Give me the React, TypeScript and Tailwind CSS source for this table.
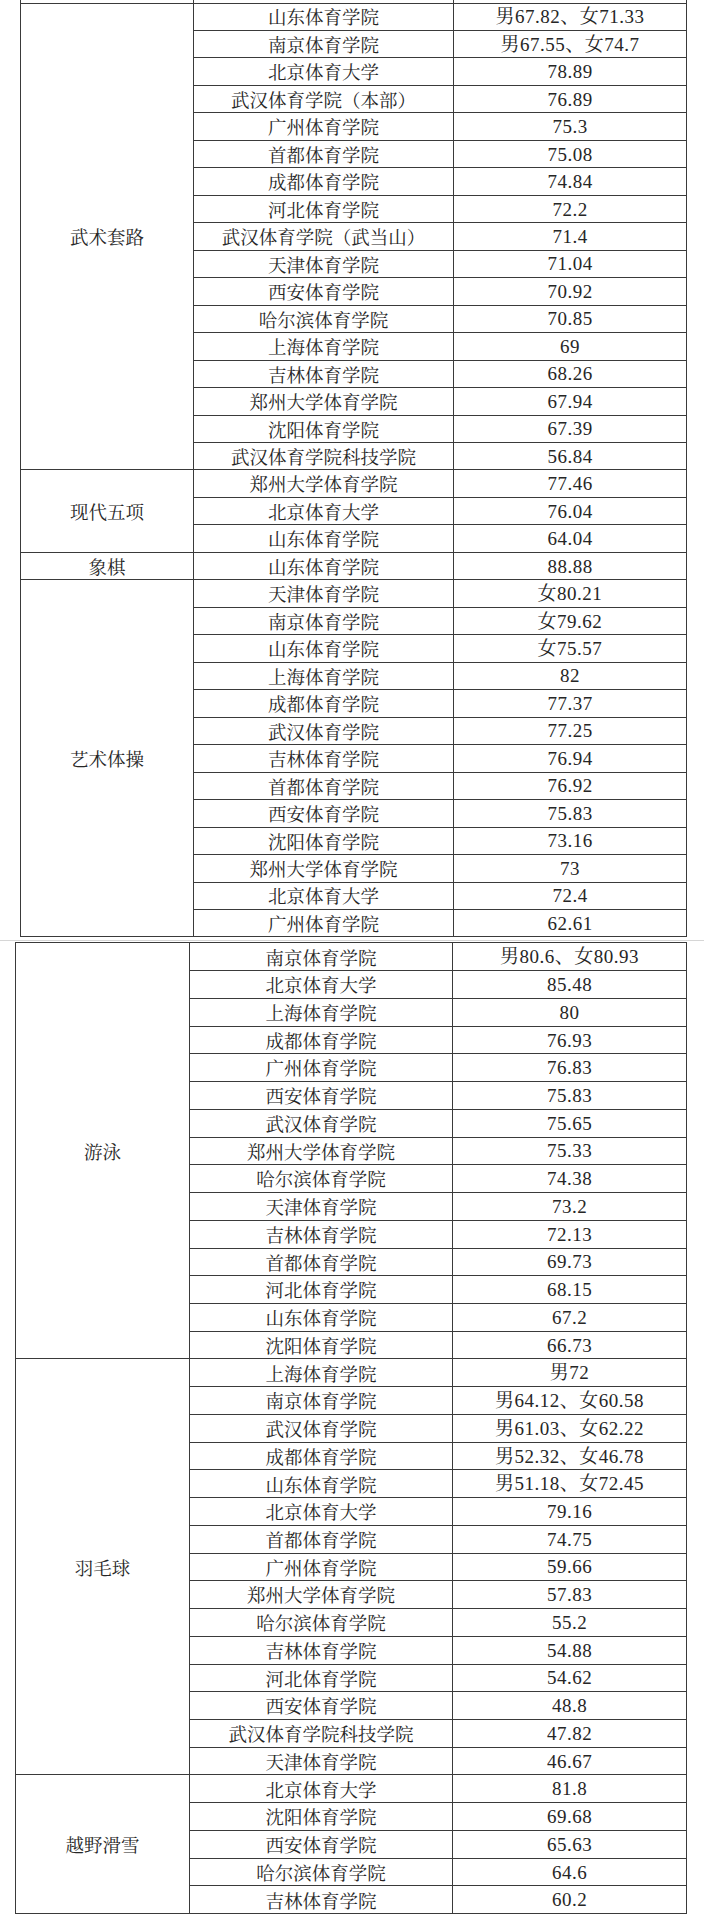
type Group = { sport: string; rows: [string, string][] }

const topGroups: Group[] = [
  {
    sport: '武术套路',
    rows: [
      ['山东体育学院', '男67.82、女71.33'],
      ['南京体育学院', '男67.55、女74.7'],
      ['北京体育大学', '78.89'],
      ['武汉体育学院（本部）', '76.89'],
      ['广州体育学院', '75.3'],
      ['首都体育学院', '75.08'],
      ['成都体育学院', '74.84'],
      ['河北体育学院', '72.2'],
      ['武汉体育学院（武当山）', '71.4'],
      ['天津体育学院', '71.04'],
      ['西安体育学院', '70.92'],
      ['哈尔滨体育学院', '70.85'],
      ['上海体育学院', '69'],
      ['吉林体育学院', '68.26'],
      ['郑州大学体育学院', '67.94'],
      ['沈阳体育学院', '67.39'],
      ['武汉体育学院科技学院', '56.84'],
    ],
  },
  {
    sport: '现代五项',
    rows: [
      ['郑州大学体育学院', '77.46'],
      ['北京体育大学', '76.04'],
      ['山东体育学院', '64.04'],
    ],
  },
  { sport: '象棋', rows: [['山东体育学院', '88.88']] },
  {
    sport: '艺术体操',
    rows: [
      ['天津体育学院', '女80.21'],
      ['南京体育学院', '女79.62'],
      ['山东体育学院', '女75.57'],
      ['上海体育学院', '82'],
      ['成都体育学院', '77.37'],
      ['武汉体育学院', '77.25'],
      ['吉林体育学院', '76.94'],
      ['首都体育学院', '76.92'],
      ['西安体育学院', '75.83'],
      ['沈阳体育学院', '73.16'],
      ['郑州大学体育学院', '73'],
      ['北京体育大学', '72.4'],
      ['广州体育学院', '62.61'],
    ],
  },
]

const bottomGroups: Group[] = [
  {
    sport: '游泳',
    rows: [
      ['南京体育学院', '男80.6、女80.93'],
      ['北京体育大学', '85.48'],
      ['上海体育学院', '80'],
      ['成都体育学院', '76.93'],
      ['广州体育学院', '76.83'],
      ['西安体育学院', '75.83'],
      ['武汉体育学院', '75.65'],
      ['郑州大学体育学院', '75.33'],
      ['哈尔滨体育学院', '74.38'],
      ['天津体育学院', '73.2'],
      ['吉林体育学院', '72.13'],
      ['首都体育学院', '69.73'],
      ['河北体育学院', '68.15'],
      ['山东体育学院', '67.2'],
      ['沈阳体育学院', '66.73'],
    ],
  },
  {
    sport: '羽毛球',
    rows: [
      ['上海体育学院', '男72'],
      ['南京体育学院', '男64.12、女60.58'],
      ['武汉体育学院', '男61.03、女62.22'],
      ['成都体育学院', '男52.32、女46.78'],
      ['山东体育学院', '男51.18、女72.45'],
      ['北京体育大学', '79.16'],
      ['首都体育学院', '74.75'],
      ['广州体育学院', '59.66'],
      ['郑州大学体育学院', '57.83'],
      ['哈尔滨体育学院', '55.2'],
      ['吉林体育学院', '54.88'],
      ['河北体育学院', '54.62'],
      ['西安体育学院', '48.8'],
      ['武汉体育学院科技学院', '47.82'],
      ['天津体育学院', '46.67'],
    ],
  },
  {
    sport: '越野滑雪',
    rows: [
      ['北京体育大学', '81.8'],
      ['沈阳体育学院', '69.68'],
      ['西安体育学院', '65.63'],
      ['哈尔滨体育学院', '64.6'],
      ['吉林体育学院', '60.2'],
    ],
  },
]

const cell = 'border border-[#3a3a3a] p-0 text-center align-middle leading-none'
const cjk =
  "font-['Noto_Serif_CJK_SC','Noto_Sans_CJK_SC',sans-serif] text-[18.5px] text-[#262626]"
const num =
  "font-['Liberation_Serif','Noto_Serif_CJK_SC','Noto_Sans_CJK_SC',serif] text-[19px] tracking-[0.5px] text-[#262626]"

function ScoreTable({
  groups,
  rowClass,
  widths,
  topStub = false,
}: {
  groups: Group[]
  rowClass: string
  widths: [string, string, string]
  topStub?: boolean
}) {
  return (
    <table className="table-fixed border-collapse bg-white">
      <colgroup>
        <col className={widths[0]} />
        <col className={widths[1]} />
        <col className={widths[2]} />
      </colgroup>
      <tbody>
        {topStub ? (
          <tr className="h-[3px]">
            <td className={cell + ' border-t-0'} />
            <td className={cell + ' border-t-0'} />
            <td className={cell + ' border-t-0'} />
          </tr>
        ) : null}
        {groups.map((g) =>
          g.rows.map(([school, score], i) => (
            <tr key={g.sport + i} className={rowClass}>
              {i === 0 ? (
                <td rowSpan={g.rows.length} className={cell + ' ' + cjk}>
                  {g.sport}
                </td>
              ) : null}
              <td className={cell + ' ' + cjk + ' whitespace-nowrap'}>{school}</td>
              <td className={cell + ' ' + num + ' whitespace-nowrap'}>{score}</td>
            </tr>
          )),
        )}
      </tbody>
    </table>
  )
}

export default function App() {
  return (
    <div className="min-h-[1916px] w-[704px] overflow-hidden bg-white">
      <div className="pl-[20px]">
        <ScoreTable
          groups={topGroups}
          rowClass="h-[27.47px]"
          widths={['w-[173px]', 'w-[260px]', 'w-[233px]']}
          topStub
        />
      </div>
      <div className="mt-[3px] h-px bg-[#d6d6d6]" />
      <div className="mt-[1px] pl-[15px]">
        <ScoreTable
          groups={bottomGroups}
          rowClass="h-[27.74px]"
          widths={['w-[174px]', 'w-[263px]', 'w-[234px]']}
        />
      </div>
    </div>
  )
}
